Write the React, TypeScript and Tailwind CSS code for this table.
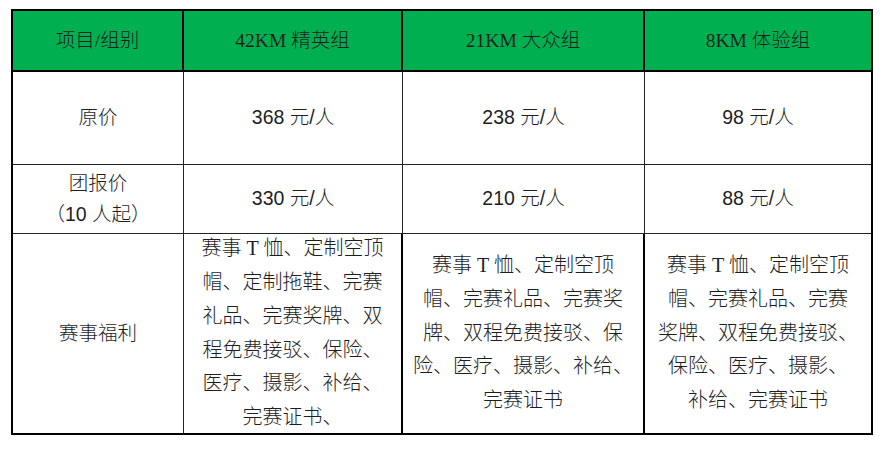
const serif = "font-['Liberation_Serif','Noto_Sans_CJK_SC',serif]";
const sans = "font-['Liberation_Sans','Noto_Sans_CJK_SC',sans-serif]";

const headers = ["项目/组别", "42KM 精英组", "21KM 大众组", "8KM 体验组"];
const widths = ["w-[171px]", "w-[219px]", "w-[242px]", "w-[226px]"];

const benefits = [
  ["赛事 T 恤、定制空顶", "帽、定制拖鞋、完赛", "礼品、完赛奖牌、双", "程免费接驳、保险、", "医疗、摄影、补给、", "完赛证书、"],
  ["赛事 T 恤、定制空顶", "帽、完赛礼品、完赛奖", "牌、双程免费接驳、保", "险、医疗、摄影、补给、", "完赛证书"],
  ["赛事 T 恤、定制空顶", "帽、完赛礼品、完赛", "奖牌、双程免费接驳、", "保险、医疗、摄影、", "补给、完赛证书"],
];

function Cell({ i, children, className = "" }: { i: number; children: React.ReactNode; className?: string }) {
  return (
    <div className={`${widths[i]} shrink-0 flex flex-col items-center justify-center text-center ${className}`}>
      {children}
    </div>
  );
}

export default function App() {
  return (
    <div className="w-[887px] h-[449px] bg-white pt-[9px] pl-[11px] text-[#1e1e1e] font-light">
      <div className="w-[862px] border-2 border-black">
        {/* header */}
        <div className="flex h-[61px] bg-[#00b050] border-b-2 border-black">
          {headers.map((h, i) => (
            <Cell key={h} i={i} className={`${serif} text-[19.5px] ${i < 3 ? "border-r-2 border-black" : ""}`}>
              {h}
            </Cell>
          ))}
        </div>

        {/* 原价 */}
        <div className={`flex h-[93px] border-b border-[#222] ${sans} text-[19.5px]`}>
          <Cell i={0} className="border-r border-[#222]">原价</Cell>
          <Cell i={1} className="border-r border-[#222]">368 元/人</Cell>
          <Cell i={2} className="border-r border-[#222]">238 元/人</Cell>
          <Cell i={3}>98 元/人</Cell>
        </div>

        {/* 团报价 */}
        <div className={`flex h-[69px] border-b border-[#222] ${sans} text-[19.5px]`}>
          <Cell i={0} className="border-r border-[#222] leading-[31px]">
            <span>团报价</span>
            <span>（10 人起）</span>
          </Cell>
          <Cell i={1} className="border-r border-[#222]">330 元/人</Cell>
          <Cell i={2} className="border-r border-[#222]">210 元/人</Cell>
          <Cell i={3}>88 元/人</Cell>
        </div>

        {/* 赛事福利 */}
        <div className={`flex h-[199px] ${serif} text-[20px] leading-[33.8px]`}>
          <Cell i={0} className={`border-r border-[#222] ${sans} text-[19.5px]`}>赛事福利</Cell>
          {benefits.map((lines, k) => (
            <Cell key={k} i={k + 1} className={`${k < 2 ? "border-r-2 border-black" : ""} whitespace-nowrap`}>
              {lines.map((l) => (
                <span key={l}>{l}</span>
              ))}
            </Cell>
          ))}
        </div>
      </div>
    </div>
  );
}
